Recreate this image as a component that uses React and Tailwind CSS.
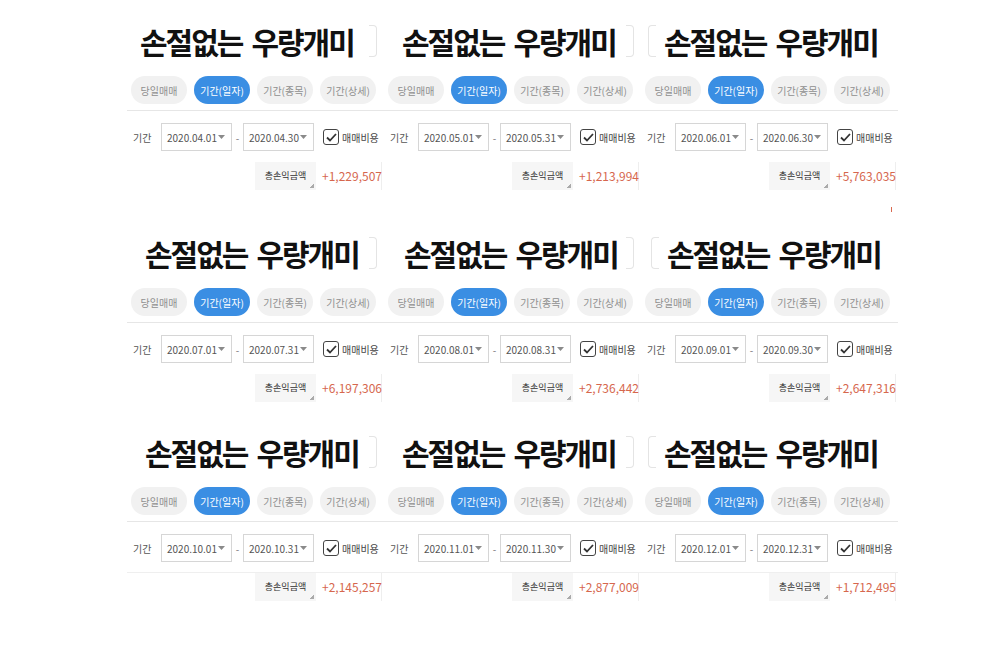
const cells = [
  { from: '2020.04.01', to: '2020.04.30', total: '+1,229,507', title: 'pl-[13px]', edge: 'right' },
  { from: '2020.05.01', to: '2020.05.31', total: '+1,213,994', title: 'pl-[18px]', edge: 'right' },
  { from: '2020.06.01', to: '2020.06.30', total: '+5,763,035', title: 'pl-[23px]', edge: 'left', mark: true },
  { from: '2020.07.01', to: '2020.07.31', total: '+6,197,306', title: 'pl-[18px]', edge: 'right' },
  { from: '2020.08.01', to: '2020.08.31', total: '+2,736,442', title: 'pl-[20px]', edge: 'right' },
  { from: '2020.09.01', to: '2020.09.30', total: '+2,647,316', title: 'pl-[26px]', edge: 'left' },
  { from: '2020.10.01', to: '2020.10.31', total: '+2,145,257', title: 'pl-[18px]', edge: 'right', rule: true },
  { from: '2020.11.01', to: '2020.11.30', total: '+2,877,009', title: 'pl-[18px]', edge: 'right', rule: true },
  { from: '2020.12.01', to: '2020.12.31', total: '+1,712,495', title: 'pl-[23px]', edge: 'left', rule: true },
]

const tabs = ['당일매매', '기간(일자)', '기간(종목)', '기간(상세)']

function Caret() {
  return (
    <svg width="7" height="4" viewBox="0 0 7 4" className="shrink-0">
      <path d="M0 0h7L3.5 4z" fill="#8a8a8a" />
    </svg>
  )
}

function DateBox({ value }) {
  return (
    <div className="flex h-[28px] w-[71px] items-center justify-between border border-[#d6d6d6] bg-white pl-[5px] pr-[6px] text-[10px] text-[#555]">
      <span>{value}</span>
      <Caret />
    </div>
  )
}

function Cell({ cell }) {
  return (
    <div className="flex flex-col">
      <div className={`flex h-[71px] items-center pt-[10px] ${cell.title}`}>
        {cell.edge === 'left' && <div className="-ml-[16px] mr-[8px] h-[32px] w-[8px] rounded-l-[4px] border border-r-0 border-[#e4e4e4]" />}
        <h2 className="flex gap-[9px] text-[30px] font-bold leading-none tracking-[-2px] text-[#111]">
          <span>손절없는</span>
          <span>우량개미</span>
        </h2>
        {cell.edge === 'right' && <div className="ml-auto mr-[7px] h-[32px] w-[8px] rounded-r-[4px] border border-l-0 border-[#e4e4e4]" />}
      </div>

      <div className="mt-[5px] flex gap-[7px] pl-[4px]">
        {tabs.map((tab, i) => (
          <span
            key={tab}
            className={
              i === 1
                ? 'flex h-[28px] w-[56px] items-center justify-center rounded-full bg-[#3a8ee3] text-[10px] text-white'
                : 'flex h-[28px] w-[56px] items-center justify-center rounded-full bg-[#f1f1f1] text-[10px] text-[#8f8f8f]'
            }
          >
            {tab}
          </span>
        ))}
      </div>

      <div className="mt-[6px] h-px bg-[#e6e6e6]" />

      <div className="mt-[12px] flex items-center pl-[6px]">
        <span className="w-[28px] text-[10px] text-[#555]">기간</span>
        <DateBox value={cell.from} />
        <span className="w-[11px] text-center text-[10px] text-[#777]">-</span>
        <DateBox value={cell.to} />
        <div className="ml-[9px] flex h-[16px] w-[16px] items-center justify-center rounded-[3px] border-[1.5px] border-[#444]">
          <svg width="11" height="9" viewBox="0 0 11 9">
            <path d="M1 4.5l3 3L10 1" fill="none" stroke="#333" strokeWidth="1.8" />
          </svg>
        </div>
        <span className="ml-[3px] text-[10px] text-[#444]">매매비용</span>
      </div>

      <div
        className={
          cell.rule
            ? 'mt-[10px] flex h-[29px] justify-end border-t border-[#efefef] pr-[2px]'
            : 'mt-[11px] flex h-[28px] justify-end pr-[2px]'
        }
      >
        <div className="relative flex w-[61px] items-center justify-center bg-[#f6f6f6] text-[9px] text-[#333]">
          총손익금액
          <span className="absolute bottom-[2px] right-[2px] h-[4px] w-[4px] bg-[linear-gradient(135deg,transparent_50%,#aaa_50%)]" />
        </div>
        <div className="flex w-[66px] items-center border-r border-[#eee] pl-[6px] text-[12px] text-[#d6674e]">
          {cell.total}
        </div>
      </div>
      {cell.mark && <div className="ml-auto mr-[6px] mt-[17px] h-[5px] w-px bg-[#d9694f]" />}
    </div>
  )
}

export default function App() {
  return (
    <div
      className="h-[667px] w-[1000px] overflow-hidden bg-white"
      style={{ fontFamily: '"Noto Sans CJK KR", "Noto Sans", sans-serif' }}
    >
      <div className="grid grid-cols-[257px_257px_257px] grid-rows-[212px_199px_256px] pl-[127px]">
        {cells.map((cell) => (
          <Cell key={cell.from} cell={cell} />
        ))}
      </div>
    </div>
  )
}
